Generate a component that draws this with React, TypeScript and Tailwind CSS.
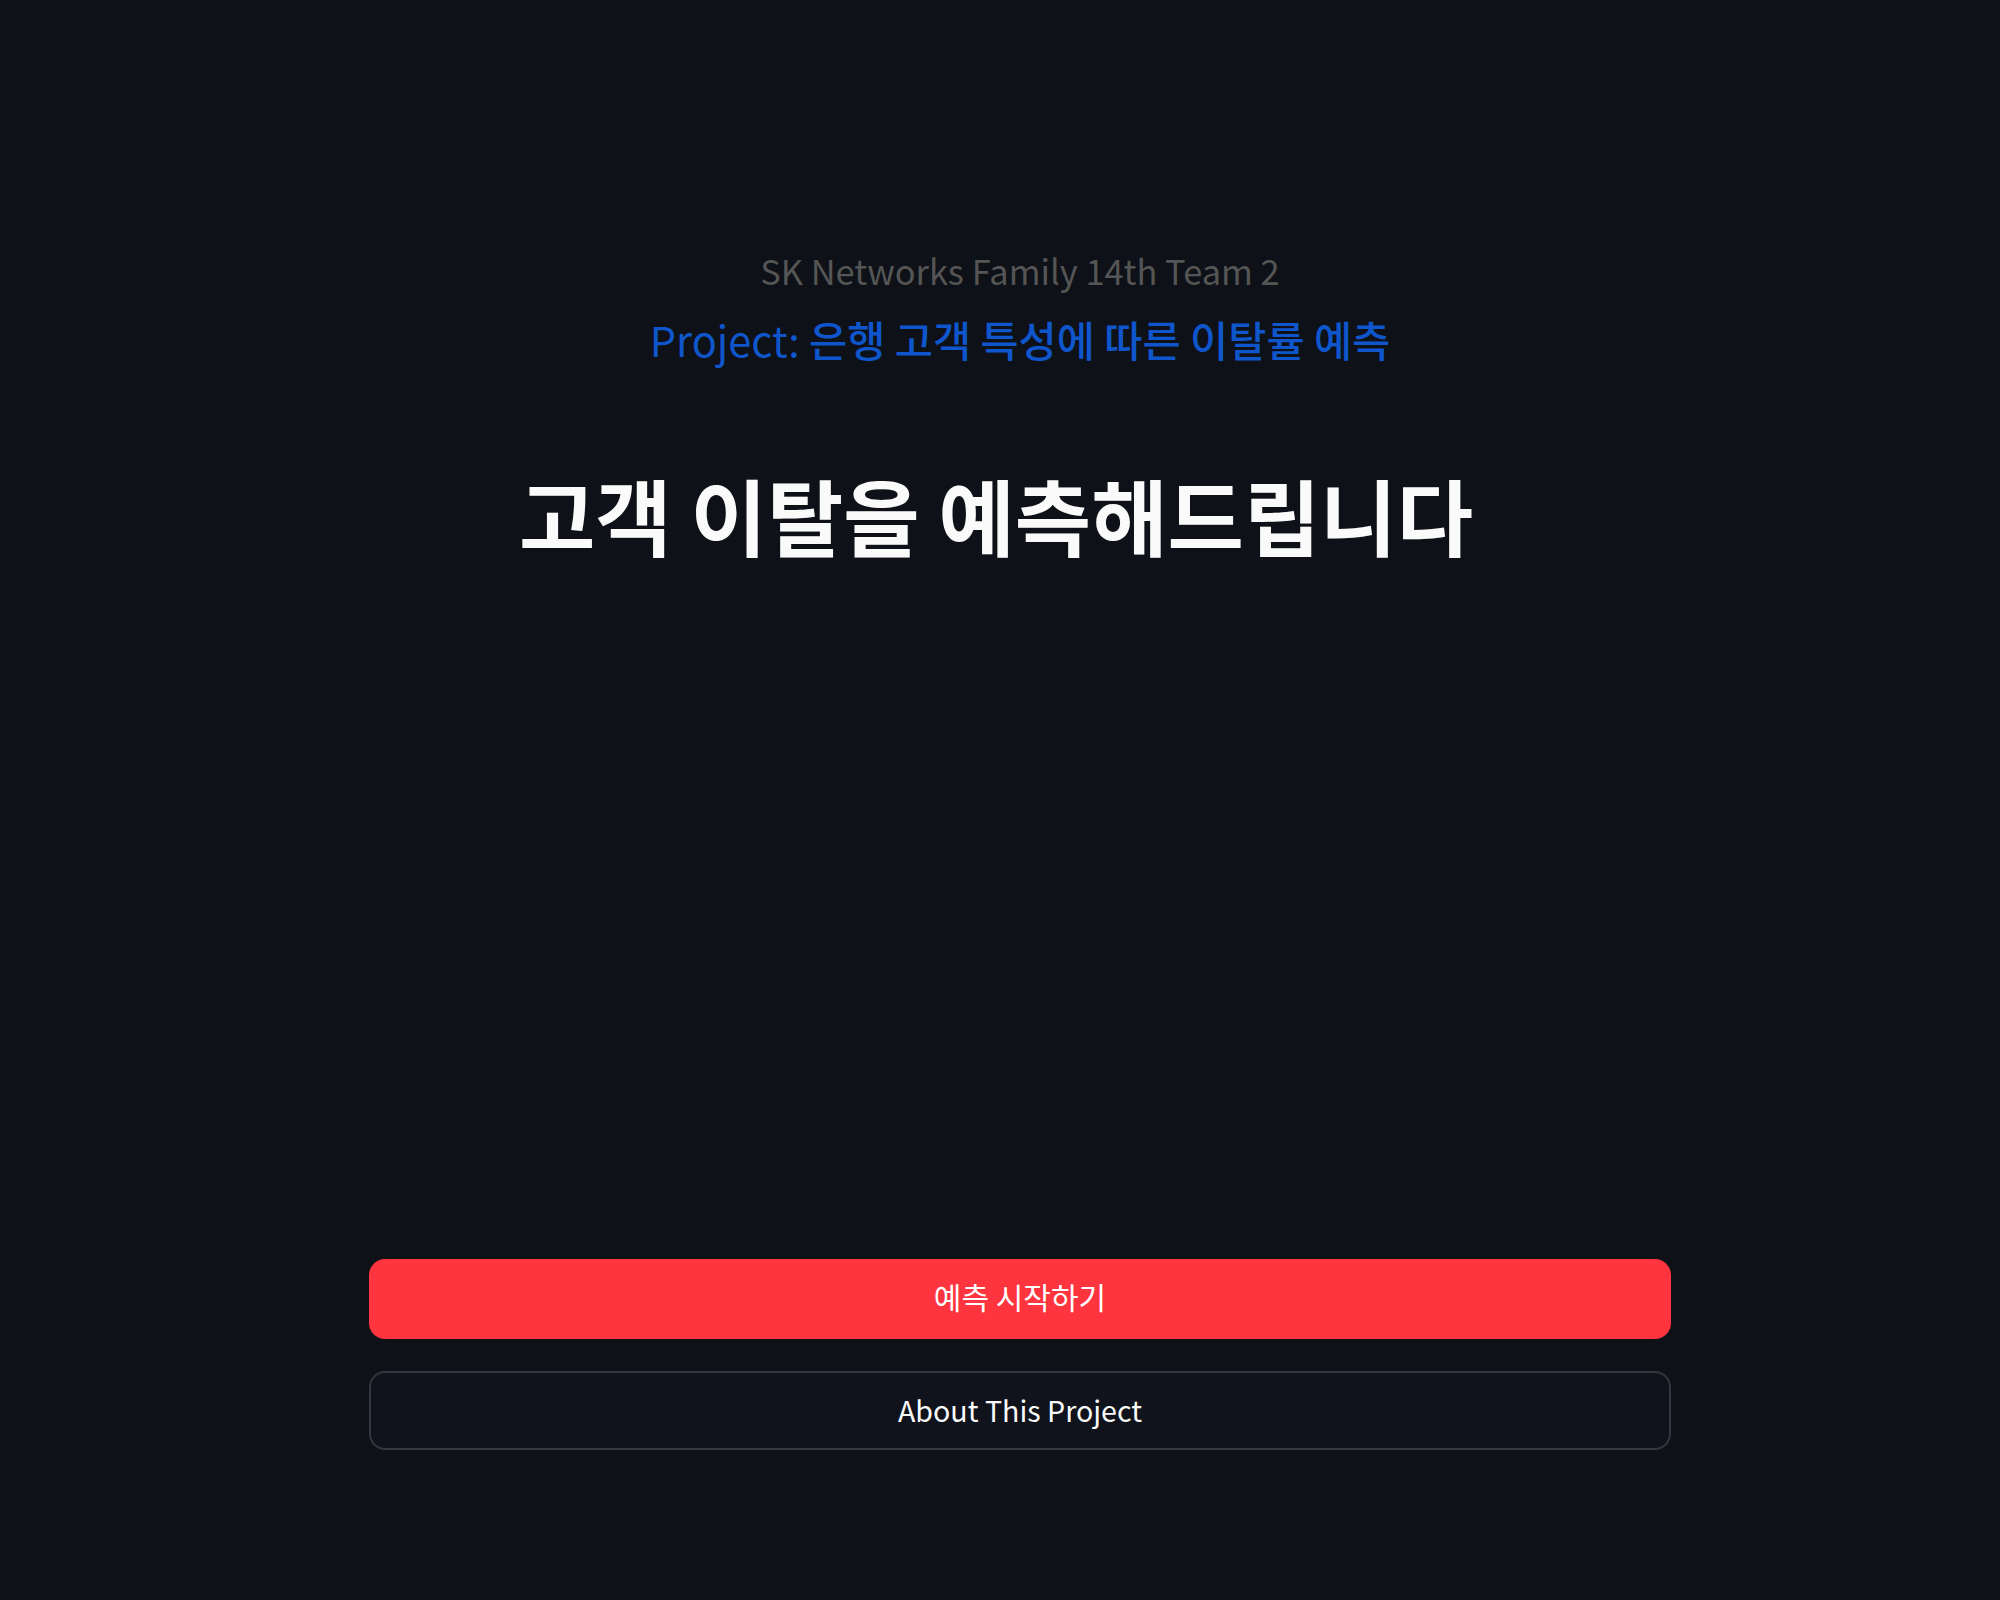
import React from "react";

const font = { fontFamily: '"Noto Sans CJK KR", "Noto Sans", sans-serif' };

export default function App() {
  return (
    <div
      className="min-h-[1600px] w-full bg-[#0e1117] flex justify-center pl-[40px]"
      style={font}
    >
      <div className="w-[1302px] flex flex-col items-center pt-[250px]">
        <p className="h-[40px] leading-[40px] text-[34.4px] text-[#555555]">
          SK Networks Family 14th Team 2
        </p>
        <p className="mt-[24px] h-[50px] leading-[50px] text-[41.5px] text-[#0f56cc]">
          Project: <span className="font-medium">은행 고객 특성에 따른 이탈률 예측</span>
        </p>
        <h1 className="mt-[100px] pr-[48px] h-[100px] leading-[100px] text-[83px] font-bold text-[#fafafa]">
          고객 이탈을 예측해드립니다
        </h1>
        <div className="mt-[695px] w-full flex flex-col gap-[32px]">
          <button className="w-full h-[80px] pb-[5px] rounded-[16px] bg-[#fe343f] text-white text-[30px] flex items-center justify-center">
            예측 시작하기
          </button>
          <button className="w-full h-[79px] rounded-[16px] bg-[#10131b] border-2 border-[#35373e] text-[#fafafa] text-[28.6px] flex items-center justify-center">
            About This Project
          </button>
        </div>
      </div>
    </div>
  );
}
